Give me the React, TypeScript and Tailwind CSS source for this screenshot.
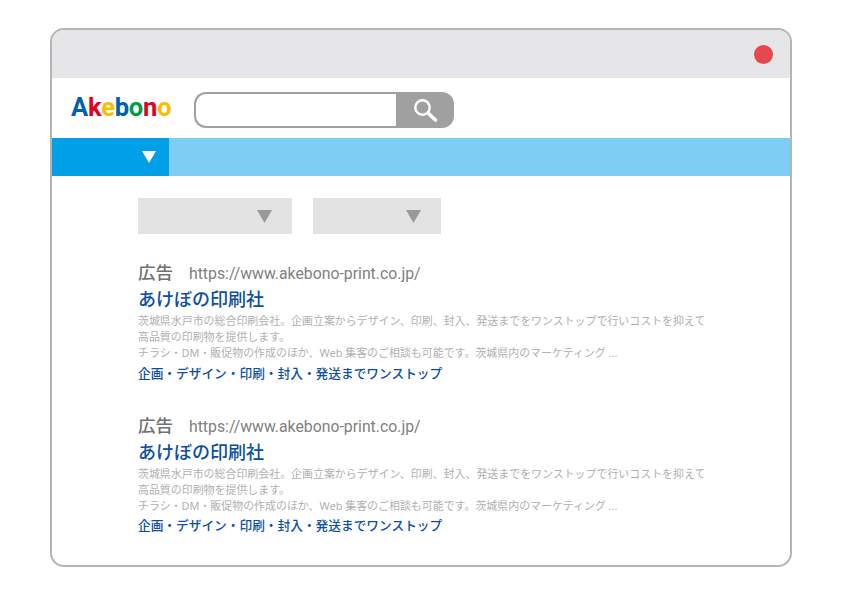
const FONT = "font-['Noto_Sans','Noto_Sans_CJK_JP',sans-serif]";

function Triangle({ className }: { className: string }) {
  return (
    <svg viewBox="0 0 14 12" className={className}>
      <polygon points="0,0 14,0 7,12" fill="currentColor" />
    </svg>
  );
}

function Ad() {
  return (
    <div>
      <div className="flex items-baseline h-[22px] leading-[22px]">
        <span className="text-[17.5px] font-medium text-[#717171] w-[51px]">広告</span>
        <span className="text-[15.8px] font-['Roboto',sans-serif] text-[#808080]">https://www.akebono-print.co.jp/</span>
      </div>
      <div className="mt-[4px] h-[24px] text-[18px] leading-[24px] font-medium text-[#0b4ea2]">あけぼの印刷社</div>
      <div className="mt-[2px] text-[10.94px] leading-[15.9px] text-[#b0b0b0]">
        <p>茨城県水戸市の総合印刷会社。企画立案からデザイン、印刷、封入、発送までをワンストップで行いコストを抑えて</p>
        <p>高品質の印刷物を提供します。</p>
        <p>チラシ・DM・販促物の作成のほか、Web 集客のご相談も可能です。茨城県内のマーケティング ...</p>
      </div>
      <div className="mt-[3px] text-[12.7px] leading-[18px] font-medium text-[#0b4ea2]">企画・デザイン・印刷・封入・発送までワンストップ</div>
    </div>
  );
}

export default function App() {
  return (
    <div className={`w-[842px] h-[595px] bg-white pt-[28px] pl-[50px] ${FONT}`}>
      <div className="w-[742px] h-[539px] border-2 border-[#b5b5b6] rounded-[14px] overflow-hidden bg-white">
        {/* title bar */}
        <div className="h-[48px] bg-[#e6e6e8] flex items-center justify-end pr-[17px]">
          <div className="w-[19px] h-[19px] rounded-full bg-[#e5484d] mt-[1px]" />
        </div>

        {/* logo + search */}
        <div className="h-[60px] flex items-center pl-[19px]">
          <div className="w-[123px] text-[25.5px] leading-none font-bold font-['Roboto',sans-serif] tracking-[-0.2px]">
            <span className="text-[#0060b0]">A</span>
            <span className="text-[#e60020]">k</span>
            <span className="text-[#fabe00]">e</span>
            <span className="text-[#0060b0]">b</span>
            <span className="text-[#009e44]">o</span>
            <span className="text-[#e60020]">n</span>
            <span className="text-[#fabe00]">o</span>
          </div>
          <div className="flex w-[260px] h-[36px] mt-[4px]">
            <div className="flex-1 border-2 border-r-0 border-[#a0a0a0] rounded-l-[12px] bg-white" />
            <div className="w-[58px] bg-[#a0a0a0] rounded-r-[12px] flex items-center justify-center">
              <svg viewBox="0 0 26 26" className="w-[26px] h-[26px]" fill="none" stroke="white">
                <circle cx="10.5" cy="10.5" r="7.2" strokeWidth="2.4" />
                <line x1="16" y1="16" x2="23.5" y2="23" strokeWidth="3.6" strokeLinecap="round" />
              </svg>
            </div>
          </div>
        </div>

        {/* blue bar */}
        <div className="h-[38px] bg-[#7dcdf5] flex">
          <div className="w-[117px] bg-[#00a0e9] flex items-center justify-end pr-[13px]">
            <Triangle className="w-[14px] h-[12px] text-white" />
          </div>
        </div>

        {/* content */}
        <div className="pl-[86px] pr-[80px] pt-[22px]">
          <div className="flex gap-[21px]">
            <div className="w-[154px] h-[36px] bg-[#e3e3e4] flex items-center justify-end pr-[20px]">
              <Triangle className="w-[15px] h-[13px] text-[#999999]" />
            </div>
            <div className="w-[128px] h-[36px] bg-[#e3e3e4] flex items-center justify-end pr-[20px]">
              <Triangle className="w-[15px] h-[13px] text-[#999999]" />
            </div>
          </div>
          <div className="mt-[27px] flex flex-col gap-[32px]">
            <Ad />
            <Ad />
          </div>
        </div>
      </div>
    </div>
  );
}
